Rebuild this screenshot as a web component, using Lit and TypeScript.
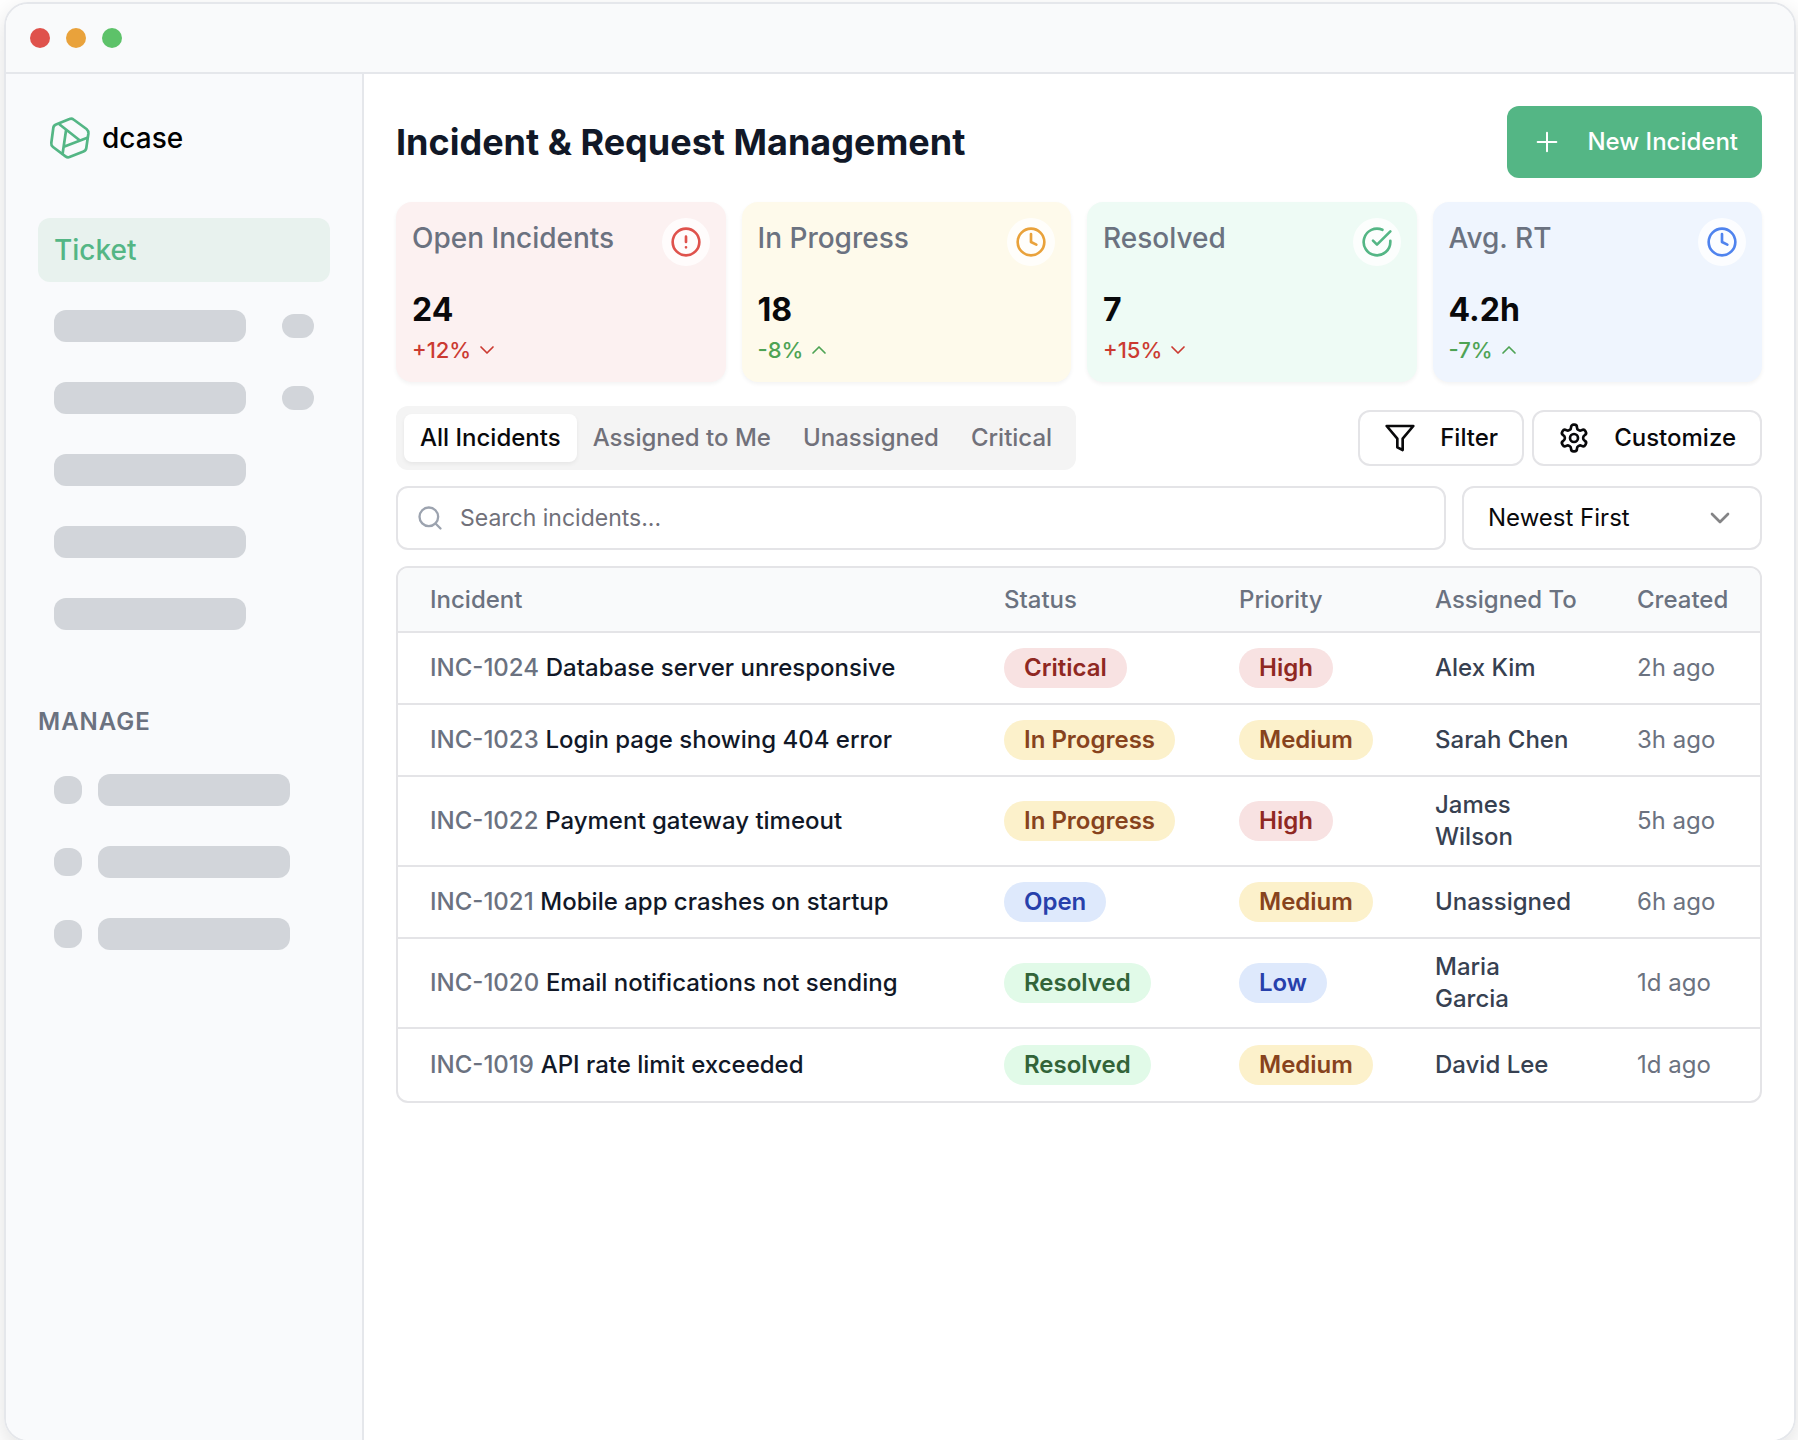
import { LitElement, html, css, svg } from "lit";
import { customElement, state } from "lit/decorators.js";

type Tone = "red" | "amber" | "green" | "blue";

interface Stat {
  label: string;
  value: string;
  change: string;
  trend: "up" | "down";
  tone: Tone;
  icon: keyof typeof icons;
}

interface Incident {
  id: string;
  title: string;
  status: string;
  priority: string;
  assignee: string;
  created: string;
}

const icons = {
  alert: svg`<circle cx="12" cy="12" r="10"/><path d="M12 8v4M12 16h.01"/>`,
  clock: svg`<circle cx="12" cy="12" r="10"/><path d="M12 6v6l4 2"/>`,
  check: svg`<path d="M22 11.08V12a10 10 0 1 1-5.93-9.14"/><path d="M22 4 12 14.01l-3-3"/>`,
  down: svg`<path d="m6 9 6 6 6-6"/>`,
  up: svg`<path d="m18 15-6-6-6 6"/>`,
  plus: svg`<path d="M5 12h14M12 5v14"/>`,
  filter: svg`<path d="M22 3H2l8 9.46V19l4 2v-8.54z"/>`,
  gear: svg`<path d="M12.22 2h-.44a2 2 0 0 0-2 2v.18a2 2 0 0 1-1 1.73l-.43.25a2 2 0 0 1-2 0l-.15-.08a2 2 0 0 0-2.73.73l-.22.38a2 2 0 0 0 .73 2.73l.15.1a2 2 0 0 1 1 1.72v.51a2 2 0 0 1-1 1.74l-.15.09a2 2 0 0 0-.73 2.73l.22.38a2 2 0 0 0 2.73.73l.15-.08a2 2 0 0 1 2 0l.43.25a2 2 0 0 1 1 1.73V20a2 2 0 0 0 2 2h.44a2 2 0 0 0 2-2v-.18a2 2 0 0 1 1-1.73l.43-.25a2 2 0 0 1 2 0l.15.08a2 2 0 0 0 2.73-.73l.22-.39a2 2 0 0 0-.73-2.73l-.15-.08a2 2 0 0 1-1-1.74v-.5a2 2 0 0 1 1-1.74l.15-.09a2 2 0 0 0 .73-2.73l-.22-.38a2 2 0 0 0-2.73-.73l-.15.08a2 2 0 0 1-2 0l-.43-.25a2 2 0 0 1-1-1.73V4a2 2 0 0 0-2-2z"/><circle cx="12" cy="12" r="3"/>`,
  search: svg`<circle cx="11" cy="11" r="8"/><path d="m21 21-4.3-4.3"/>`,
};

const icon = (name: keyof typeof icons, cls: string) => html`
  <svg class="icon ${cls}" viewBox="0 0 24 24" aria-hidden="true">${icons[name]}</svg>
`;

const stats: Stat[] = [
  { label: "Open Incidents", value: "24", change: "+12%", trend: "down", tone: "red", icon: "alert" },
  { label: "In Progress", value: "18", change: "-8%", trend: "up", tone: "amber", icon: "clock" },
  { label: "Resolved", value: "7", change: "+15%", trend: "down", tone: "green", icon: "check" },
  { label: "Avg. RT", value: "4.2h", change: "-7%", trend: "up", tone: "blue", icon: "clock" },
];

const incidents: Incident[] = [
  { id: "INC-1024", title: "Database server unresponsive", status: "Critical", priority: "High", assignee: "Alex Kim", created: "2h ago" },
  { id: "INC-1023", title: "Login page showing 404 error", status: "In Progress", priority: "Medium", assignee: "Sarah Chen", created: "3h ago" },
  { id: "INC-1022", title: "Payment gateway timeout", status: "In Progress", priority: "High", assignee: "James Wilson", created: "5h ago" },
  { id: "INC-1021", title: "Mobile app crashes on startup", status: "Open", priority: "Medium", assignee: "Unassigned", created: "6h ago" },
  { id: "INC-1020", title: "Email notifications not sending", status: "Resolved", priority: "Low", assignee: "Maria Garcia", created: "1d ago" },
  { id: "INC-1019", title: "API rate limit exceeded", status: "Resolved", priority: "Medium", assignee: "David Lee", created: "1d ago" },
];

const tones: Record<string, Tone> = {
  Critical: "red",
  High: "red",
  "In Progress": "amber",
  Medium: "amber",
  Open: "blue",
  Low: "blue",
  Resolved: "green",
};

const tabs = ["All Incidents", "Assigned to Me", "Unassigned", "Critical"];

@customElement("app-root")
export class AppRoot extends LitElement {
  @state() private tab = tabs[0];

  static styles = css`
    :host {
      display: block;
      height: 100vh;
      overflow: hidden;
      background: #fff;
      color: #09090b;
      font-family: Inter, "Liberation Sans", sans-serif;
      font-size: 24px;
      line-height: 32px;
    }
    *, *::before, *::after { box-sizing: border-box; }
    h1, h2, p { margin: 0; }
    button, input, select { font: inherit; color: inherit; margin: 0; }
    button { cursor: pointer; }

    .icon {
      display: block;
      flex: none;
      width: 32px;
      height: 32px;
      fill: none;
      stroke: currentColor;
      stroke-width: 2;
      stroke-linecap: round;
      stroke-linejoin: round;
    }
    .thin { stroke-width: 1.5; }
    .small { width: 24px; height: 24px; stroke-width: 1.7; }
    .medium { width: 28px; height: 28px; }

    .window {
      display: flex;
      flex-direction: column;
      height: 100vh;
      margin: 2px 2px 0 4px;
      border: 2px solid #e5e7eb;
      border-radius: 24px;
      overflow: hidden;
      box-shadow: 0 8px 24px rgba(0, 0, 0, 0.12);
    }
    .titlebar {
      display: flex;
      gap: 16px;
      padding: 24px;
      background: #f9fafb;
      border-bottom: 2px solid #e5e7eb;
    }
    .dot { width: 20px; height: 20px; border-radius: 50%; }
    .dot.close { background: #df524c; }
    .dot.minimise { background: #e9a23b; }
    .dot.zoom { background: #5dc269; }
    .body { display: flex; flex: 1; min-height: 0; }

    .sidebar {
      flex: none;
      width: 358px;
      padding: 32px;
      background: #f9fafc;
      border-right: 2px solid #e5e7eb;
    }
    .brand {
      display: flex;
      align-items: center;
      gap: 10px;
      height: 64px;
      padding-left: 10px;
      color: #000;
      font-size: 28px;
      font-weight: 500;
    }
    .logo {
      width: 44px;
      height: 44px;
      fill: none;
      stroke: #54b685;
      stroke-width: 2.7;
      stroke-linejoin: round;
    }
    .nav { display: flex; flex-direction: column; gap: 8px; margin-top: 48px; }
    .nav-link {
      height: 64px;
      margin-bottom: 4px;
      padding: 0 16px;
      border-radius: 12px;
      background: #e8f2ee;
      color: #54b685;
      font-size: 28px;
      font-weight: 500;
      line-height: 64px;
      text-decoration: none;
    }
    .placeholder {
      display: flex;
      align-items: center;
      gap: 16px;
      height: 64px;
      padding: 0 16px;
    }
    .bar { width: 192px; height: 32px; border-radius: 12px; background: #d2d5da; }
    .pill { width: 32px; height: 24px; margin-left: auto; border-radius: 12px; background: #d2d5da; }
    .bullet { width: 28px; height: 28px; border-radius: 12px; background: #d2d5da; }
    .section { margin-top: 60px; color: #6b7280; font-size: 24px; font-weight: 600; letter-spacing: 1px; }
    .section + .nav { margin-top: 20px; }

    .main {
      display: flex;
      flex: 1;
      flex-direction: column;
      gap: 16px;
      min-width: 0;
      padding: 32px;
      background: #fff;
    }
    .head { display: flex; align-items: center; justify-content: space-between; margin-bottom: 8px; }
    h1 { color: #111827; font-size: 36px; font-weight: 700; line-height: 56px; }
    .primary {
      display: flex;
      align-items: center;
      gap: 24px;
      height: 72px;
      padding: 0 24px;
      border: 0;
      border-radius: 12px;
      background: #54b685;
      color: #fff;
      font-weight: 500;
    }

    .stats { display: grid; grid-template-columns: repeat(4, 1fr); gap: 16px; margin-bottom: 8px; }
    .card {
      height: 180px;
      padding: 16px;
      border-radius: 16px;
      box-shadow: 0 2px 4px rgba(0, 0, 0, 0.05);
    }
    .card.red { background: #fcf1f1; }
    .card.amber { background: #fefaeb; }
    .card.green { background: #eefbf5; }
    .card.blue { background: #eff5fe; }
    .card-head { display: flex; justify-content: space-between; height: 72px; }
    .card h2 { color: #6b7280; font-size: 28px; font-weight: 500; line-height: 40px; }
    .badge { width: 48px; height: 48px; padding: 8px; border-radius: 50%; background: rgba(255, 255, 255, 0.8); }
    .red .badge { color: #df524c; }
    .amber .badge { color: #e9a23b; }
    .green .badge { color: #54b685; }
    .blue .badge { color: #4f83ee; }
    .value { font-size: 32px; font-weight: 700; line-height: 40px; }
    .change { display: flex; align-items: center; gap: 4px; font-size: 22px; line-height: 40px; font-weight: 500; }
    .change.down { color: #cb3a31; }
    .change.up { color: #4ea354; }

    .toolbar { display: flex; align-items: center; justify-content: space-between; }
    .tabs { display: flex; padding: 8px; border-radius: 12px; background: #f4f4f4; }
    .tab {
      height: 48px;
      padding: 0 16px;
      border: 0;
      border-radius: 8px;
      background: none;
      color: #71717a;
      font-weight: 500;
    }
    .tab.active { background: #fff; color: #09090b; box-shadow: 0 2px 4px rgba(0, 0, 0, 0.06); }
    .actions { display: flex; gap: 8px; }
    .outline {
      display: flex;
      align-items: center;
      gap: 24px;
      height: 56px;
      padding: 0 24px;
      border: 2px solid #e4e4e7;
      border-radius: 12px;
      background: #fff;
      font-weight: 500;
    }

    .filters { display: flex; gap: 16px; }
    .search {
      display: flex;
      flex: 1;
      align-items: center;
      gap: 16px;
      height: 64px;
      padding: 0 18px;
      border: 2px solid #e4e4e7;
      border-radius: 12px;
    }
    .search .icon { color: #9ca3af; }
    .search input { flex: 1; min-width: 0; height: 56px; padding: 0; border: 0; outline: 0; background: none; font-size: 23px; }
    .search input::placeholder { color: #71717a; opacity: 1; }
    .sort { display: grid; align-items: center; width: 300px; }
    .sort select {
      grid-area: 1 / 1;
      height: 64px;
      padding: 0 24px;
      border: 2px solid #e4e4e7;
      border-radius: 12px;
      background: #fff;
      appearance: none;
    }
    .sort .icon { grid-area: 1 / 1; justify-self: end; margin-right: 26px; color: #848486; pointer-events: none; }

    .table { border: 2px solid #e4e4e7; border-radius: 12px; overflow: hidden; }
    table { width: 100%; border-collapse: separate; border-spacing: 0; table-layout: fixed; }
    th, td { padding: 0 0 0 32px; text-align: left; vertical-align: middle; }
    th { height: 65px; background: #f9fafb; border-bottom: 2px solid #e4e4e7; color: #6b7280; font-weight: 500; white-space: nowrap; }
    td { height: 72px; padding-top: 12px; padding-bottom: 12px; border-bottom: 2px solid #e4e4e7; }
    tr:last-child td { border-bottom: 0; }
    .c-status { width: 235px; }
    .c-priority { width: 196px; }
    .c-assignee { width: 202px; }
    .c-created { width: 155px; }
    .id { color: #6b7280; font-weight: 500; }
    .title { color: #111827; font-weight: 500; }
    .who { padding-right: 32px; color: #374151; font-weight: 500; }
    .when { color: #6b7280; }
    .tag { display: block; width: fit-content; padding: 4px 20px; border-radius: 20px; font-weight: 600; white-space: nowrap; }
    .tag.red { background: #f8e2e2; color: #8f2822; }
    .tag.amber { background: #fcf1cb; color: #87431d; }
    .tag.blue { background: #dee9fc; color: #2740ab; }
    .tag.green { background: #e1fae8; color: #326439; }
  `;

  private renderTag(text: string) {
    return html`<span class="tag ${tones[text]}">${text}</span>`;
  }

  private renderSidebar() {
    return html`
      <aside class="sidebar">
        <div class="brand">
          <svg class="logo" viewBox="0 0 44 44" aria-hidden="true">
            <path d="M21.500 3Q23.700 2 25.500 3.500L38.500 13Q40.700 15 40.400 17.500L38.300 32Q38 34.500 35.500 35.500L21.500 41Q19.500 41.800 17.500 40.300L5 31Q3 29.500 3.300 27L5.300 12Q5.500 9.500 8 8.500z"/>
            <path d="M11 8 31.300 24M18 14.500 14.500 38.500M16.500 30.500 40 21.500"/>
          </svg>
          dcase
        </div>
        <nav class="nav">
          <a class="nav-link" href="#ticket">Ticket</a>
          ${[true, true, false, false, false].map((counted) => html`
            <div class="placeholder">
              <span class="bar"></span>
              ${counted ? html`<span class="pill"></span>` : null}
            </div>`)}
        </nav>
        <h2 class="section">MANAGE</h2>
        <div class="nav">
          ${[0, 1, 2].map(() => html`
            <div class="placeholder"><span class="bullet"></span><span class="bar"></span></div>`)}
        </div>
      </aside>
    `;
  }

  render() {
    return html`
      <div class="window">
        <div class="titlebar">
          <span class="dot close"></span><span class="dot minimise"></span><span class="dot zoom"></span>
        </div>
        <div class="body">
          ${this.renderSidebar()}
          <main class="main">
            <header class="head">
              <h1>Incident &amp; Request Management</h1>
              <button class="primary" type="button">${icon("plus", "thin")}<span>New Incident</span></button>
            </header>
            <section class="stats">
              ${stats.map((s) => html`
                <article class="card ${s.tone}">
                  <div class="card-head">
                    <h2>${s.label}</h2>
                    <span class="badge">${icon(s.icon, "")}</span>
                  </div>
                  <p class="value">${s.value}</p>
                  <p class="change ${s.trend}"><span>${s.change}</span>${icon(s.trend, "small")}</p>
                </article>`)}
            </section>
            <div class="toolbar">
              <div class="tabs" role="tablist">
                ${tabs.map((t) => html`
                  <button
                    class="tab ${t === this.tab ? "active" : ""}"
                    type="button"
                    role="tab"
                    aria-selected=${t === this.tab}
                    @click=${() => (this.tab = t)}
                  >${t}</button>`)}
              </div>
              <div class="actions">
                <button class="outline" type="button">${icon("filter", "")}<span>Filter</span></button>
                <button class="outline" type="button">${icon("gear", "")}<span>Customize</span></button>
              </div>
            </div>
            <div class="filters">
              <label class="search">
                ${icon("search", "medium")}
                <input type="search" placeholder="Search incidents..." aria-label="Search incidents" />
              </label>
              <label class="sort">
                <select aria-label="Sort order"><option>Newest First</option></select>
                ${icon("down", "")}
              </label>
            </div>
            <div class="table">
              <table>
                <thead>
                  <tr>
                    <th>Incident</th>
                    <th class="c-status">Status</th>
                    <th class="c-priority">Priority</th>
                    <th class="c-assignee">Assigned To</th>
                    <th class="c-created">Created</th>
                  </tr>
                </thead>
                <tbody>
                  ${incidents.map((i) => html`
                    <tr>
                      <td><span class="id">${i.id}</span> <span class="title">${i.title}</span></td>
                      <td>${this.renderTag(i.status)}</td>
                      <td>${this.renderTag(i.priority)}</td>
                      <td class="who">${i.assignee}</td>
                      <td class="when">${i.created}</td>
                    </tr>`)}
                </tbody>
              </table>
            </div>
          </main>
        </div>
      </div>
    `;
  }
}
